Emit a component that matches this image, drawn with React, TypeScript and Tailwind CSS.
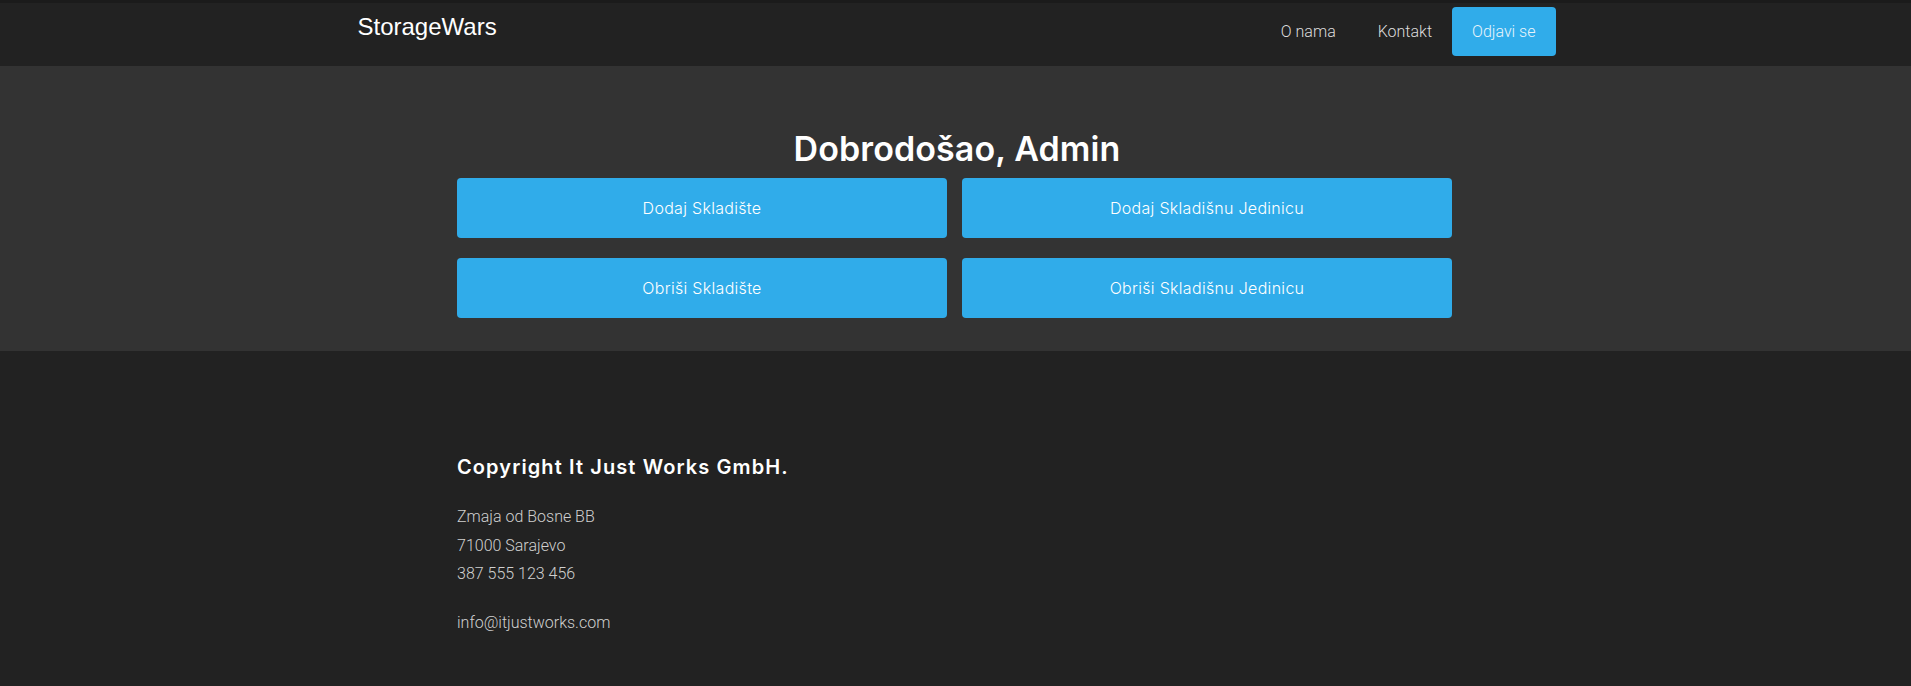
import React from 'react'

const heading = "font-['Inter','Noto_Sans',sans-serif]"
const body = "font-['Roboto','Liberation_Sans',sans-serif]"

const actions = [
  'Dodaj Skladište',
  'Dodaj Skladišnu Jedinicu',
  'Obriši Skladište',
  'Obriši Skladišnu Jedinicu',
]

function Navbar() {
  return (
    <nav className="bg-[#222222] border-t-[3px] border-[#1b1b1b] h-[66px]">
      <div className="mx-auto w-[1200px] pl-[2px] flex items-start justify-between">
        <a className="mt-[10px] text-[24px] leading-[28px] text-white font-['Liberation_Sans',Arial,sans-serif]">
          StorageWars
        </a>
        <div className={`flex items-center mt-[4px] ${body} font-light text-[16px] text-[#dddddd]`}>
          <a className="pl-5 pr-[22px]">O nama</a>
          <a className="px-5">Kontakt</a>
          <button className="h-[49px] px-[20px] rounded-[4px] bg-[#30acea] text-[#e8f4fb]">Odjavi se</button>
        </div>
      </div>
    </nav>
  )
}

function Hero() {
  return (
    <section className="bg-[#333333] h-[285px] pt-[60px]">
      <div className="mx-auto w-[997px] pr-[2px]">
        <h1 className={`${heading} font-semibold text-[34px] leading-[46px] tracking-[0.1px] pl-[5px] text-white text-center`}>
          Dobrodošao, Admin
        </h1>
        <div className="grid grid-cols-2 gap-x-[15px] gap-y-[20px] mt-[6px]">
          {actions.map(label => (
            <button
              key={label}
              className={`${heading} font-light h-[60px] rounded-[4px] bg-[#30acea] text-white text-[16px] tracking-[0.3px]`}
            >
              {label}
            </button>
          ))}
        </div>
      </div>
    </section>
  )
}

function Footer() {
  return (
    <footer className="bg-[#222222] h-[335px] pt-[102px]">
      <div className="mx-auto w-[997px] pr-[2px]">
        <h4 className={`${heading} font-semibold text-[20px] leading-[28px] tracking-[1.1px] text-white`}>
          Copyright It Just Works GmbH.
        </h4>
        <div className={`${body} font-light text-[16px] leading-[28.5px] text-[#d0d0d0] mt-[22px]`}>
          <p>Zmaja od Bosne BB</p>
          <p>71000 Sarajevo</p>
          <p>387 555 123 456</p>
          <p className="mt-[20px]">info@itjustworks.com</p>
        </div>
      </div>
    </footer>
  )
}

export default function App() {
  return (
    <div className="min-h-[686px] bg-[#222222]">
      <Navbar />
      <Hero />
      <Footer />
    </div>
  )
}
